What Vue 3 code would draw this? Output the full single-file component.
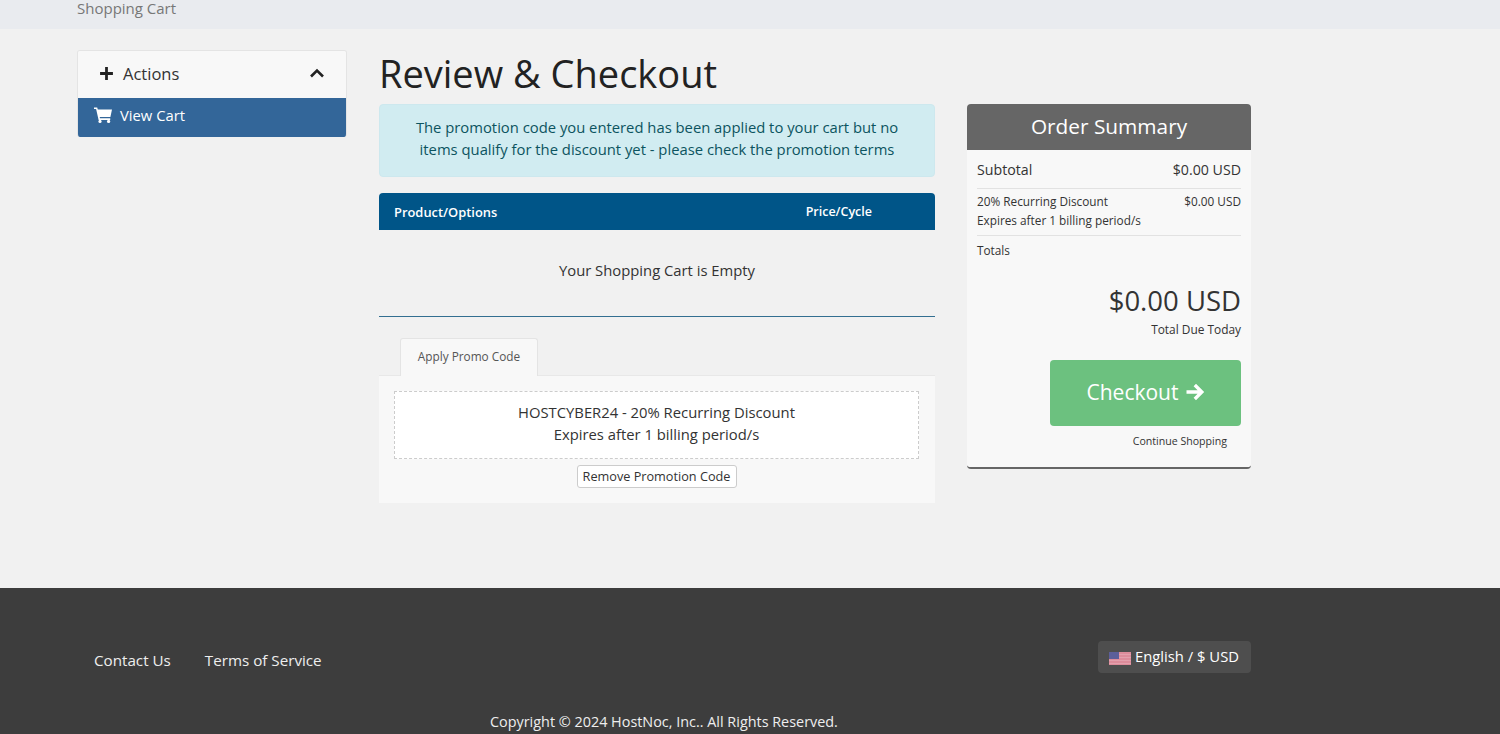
<template>
  <div class="page">
    <div class="top-bar">
      <div class="wrap">Shopping Cart</div>
    </div>

    <div class="wrap content">
      <aside class="sidebar">
        <div class="side-head">
          <span class="side-title">
            <svg class="plus" viewBox="0 0 14 14"><path d="M7 1v12M1 7h12" fill="none" stroke="#222" stroke-width="2.6" /></svg>
            Actions
          </span>
          <svg class="chevron" viewBox="0 0 16 10"><path d="M2 8.5l6-6 6 6" fill="none" stroke="#222" stroke-width="2.6" /></svg>
        </div>
        <a class="side-item">
          <svg class="cart" viewBox="0 0 18 16">
            <path d="M0 0.4h3.2l.6 2H18l-1.6 7.6H5.7l.3 1.3h10.2v1.6H4.6L2.1 2H0z" fill="#fff" />
            <circle cx="6" cy="14.4" r="1.6" fill="#fff" />
            <circle cx="14.6" cy="14.4" r="1.6" fill="#fff" />
          </svg>
          View Cart
        </a>
      </aside>

      <main class="main">
        <h1>Review &amp; Checkout</h1>
        <div class="alert">
          The promotion code you entered has been applied to your cart but no items qualify for the discount yet - please check the promotion terms
        </div>
        <div class="table-head">
          <span>Product/Options</span>
          <span class="price">Price/Cycle</span>
        </div>
        <div class="empty">Your Shopping Cart is Empty</div>

        <div class="tabs">
          <div class="tab">Apply Promo Code</div>
        </div>
        <div class="tab-body">
          <div class="promo">
            HOSTCYBER24 - 20% Recurring Discount<br />
            Expires after 1 billing period/s
          </div>
          <button class="remove">Remove Promotion Code</button>
        </div>
      </main>

      <section class="summary">
        <div class="summary-head">Order Summary</div>
        <div class="summary-body">
          <div class="row sub">
            <span>Subtotal</span>
            <span>$0.00 USD</span>
          </div>
          <div class="row discount">
            <span>20% Recurring Discount<br />Expires after 1 billing period/s</span>
            <span>$0.00 USD</span>
          </div>
          <div class="totals-label">Totals</div>
          <div class="total">$0.00 USD</div>
          <div class="due">Total Due Today</div>
          <div class="actions">
            <button class="checkout">
              Checkout
              <svg class="arrow" viewBox="0 0 20 18"><path d="M1.5 9h15M9.8 2l7 7-7 7" fill="none" stroke="#fff" stroke-width="3.4" /></svg>
            </button>
            <a class="continue">Continue Shopping</a>
          </div>
        </div>
      </section>
    </div>

    <footer class="footer">
      <div class="wrap footer-top">
        <nav class="links">
          <a>Contact Us</a>
          <a>Terms of Service</a>
        </nav>
        <button class="lang">
          <svg class="flag" viewBox="0 0 22 13">
            <rect width="22" height="13" fill="#dd8c9b" />
            <path d="M0 2.5h22M0 5.5h22M0 8.5h22M0 11.5h22" stroke="#e3a0ad" stroke-width="1" />
            <rect width="10" height="7" fill="#5c5f9a" />
          </svg>
          English / $ USD
        </button>
      </div>
      <div class="copyright">Copyright © 2024 HostNoc, Inc.. All Rights Reserved.</div>
    </footer>
  </div>
</template>

<script setup>
</script>

<style>
html, body {
  margin: 0;
  overflow: hidden;
}
</style>

<style scoped>
.page {
  height: 734px;
  overflow: hidden;
  background: #f1f1f1;
  font-family: "Open Sans", sans-serif;
  color: #333;
  display: flex;
  flex-direction: column;
}

.wrap {
  width: 1174px;
  margin-left: 77px;
}

.top-bar {
  height: 29px;
  flex: none;
  background: #e9ebef;
  color: #777;
  font-size: 15px;
  line-height: 17px;
}

.content {
  display: flex;
  align-items: flex-start;
  gap: 32px;
  padding-top: 21px;
  height: 559px;
  box-sizing: border-box;
  flex: none;
}

.sidebar {
  width: 270px;
  flex: none;
  box-sizing: border-box;
  border: 1px solid #e4e4e4;
  border-bottom: 0;
  border-radius: 3px;
  overflow: hidden;
}

.side-head {
  height: 47px;
  background: #f8f8f8;
  box-sizing: border-box;
  display: flex;
  align-items: center;
  justify-content: space-between;
  padding: 0 21px 2px 21px;
}

.side-title {
  display: flex;
  align-items: center;
  gap: 9px;
  font-size: 16.5px;
  color: #333;
}

.plus {
  width: 15px;
  height: 15px;
}

.chevron {
  width: 16px;
  height: 10px;
  margin-bottom: 2px;
}

.side-item {
  height: 39px;
  background: #336699;
  color: #fff;
  display: flex;
  align-items: center;
  gap: 8px;
  padding-left: 16px;
  padding-bottom: 5px;
  box-sizing: border-box;
  font-size: 14.8px;
  font-weight: 500;
}

.cart {
  width: 18px;
  height: 16px;
}

.main {
  width: 556px;
  flex: none;
}

h1 {
  margin: 0;
  font-size: 38px;
  font-weight: 400;
  line-height: 47px;
  color: #222;
}

.alert {
  margin-top: 7px;
  height: 73px;
  box-sizing: border-box;
  background: #d1ecf1;
  border: 1px solid #cde8ee;
  border-radius: 4px;
  color: #0c5460;
  font-size: 14.8px;
  line-height: 22px;
  text-align: center;
  padding: 11px 30px;
}

.table-head {
  margin-top: 16px;
  height: 37px;
  background: #058;
  border-radius: 4px 4px 0 0;
  color: #fff;
  font-size: 12.9px;
  font-weight: 600;
  display: flex;
  align-items: center;
  justify-content: space-between;
  padding: 0 63px 0 15px;
  box-sizing: border-box;
}

.price {
  font-size: 12.5px;
}

.empty {
  height: 87px;
  box-sizing: border-box;
  border-bottom: 1px solid #336f91;
  text-align: center;
  font-size: 14.8px;
  padding-top: 29px;
  line-height: 22px;
  color: #333;
}

.tabs {
  margin-top: 21px;
  padding-left: 21px;
  border-bottom: 1px solid #e8e8e8;
  display: flex;
  height: 37px;
}

.tab {
  width: 138px;
  height: 38px;
  box-sizing: border-box;
  background: #f8f8f8;
  border: 1px solid #e4e4e4;
  border-bottom: 0;
  border-radius: 3px 3px 0 0;
  text-align: center;
  font-size: 11.8px;
  line-height: 34px;
  color: #555;
}

.tab-body {
  background: #f8f8f8;
  height: 127px;
  box-sizing: border-box;
  padding: 15px 16px 0 15px;
  text-align: center;
}

.promo {
  height: 68px;
  box-sizing: border-box;
  background: #fff;
  border: 1px dashed #ccc;
  font-size: 14.8px;
  line-height: 22px;
  padding-top: 9px;
  color: #333;
}

.remove {
  display: block;
  margin: 6px auto 0;
  height: 23px;
  width: 160px;
  padding: 0 0 2px;
  background: #fff;
  border: 1px solid #ccc;
  border-radius: 3px;
  font-family: inherit;
  font-size: 12.7px;
  color: #333;
}

.summary {
  width: 284px;
  flex: none;
  margin-top: 54px;
  border-radius: 4px;
  overflow: hidden;
  background: #f8f8f8;
  border-bottom: 2px solid #666;
}

.summary-head {
  height: 46px;
  background: #666;
  color: #fff;
  text-align: center;
  font-size: 20.8px;
  line-height: 44px;
}

.summary-body {
  padding: 0 10px;
  height: 317px;
  box-sizing: border-box;
}

.row {
  display: flex;
  justify-content: space-between;
  border-bottom: 1px solid #e2e2e2;
}

.sub {
  height: 39px;
  box-sizing: border-box;
  font-size: 14.2px;
  line-height: 40px;
  align-items: flex-start;
}

.discount {
  height: 47px;
  box-sizing: border-box;
  font-size: 11.8px;
  line-height: 19px;
  padding-top: 3px;
}

.totals-label {
  font-size: 11.8px;
  line-height: 14px;
  margin-top: 7px;
}

.total {
  margin-top: 27px;
  text-align: right;
  font-size: 27.5px;
  line-height: 34px;
  color: #333;
}

.due {
  margin-top: 4px;
  text-align: right;
  font-size: 11.9px;
  line-height: 15px;
}

.actions {
  margin-top: 23px;
  display: flex;
  flex-direction: column;
  align-items: flex-end;
}

.checkout {
  width: 191px;
  height: 66px;
  background: #6cc17f;
  border: 0;
  border-radius: 4px;
  color: #fff;
  font-family: inherit;
  font-size: 21px;
  display: flex;
  align-items: center;
  justify-content: center;
  gap: 6px;
  padding: 0 0 2px;
}

.arrow {
  width: 20px;
  height: 18px;
}

.continue {
  margin-top: 8px;
  margin-right: 14px;
  font-size: 10.6px;
  line-height: 15px;
  color: #333;
}

.footer {
  flex: 1;
  background: #3d3d3d;
  color: #fff;
}

.footer-top {
  display: flex;
  justify-content: space-between;
  align-items: flex-start;
  padding-top: 53px;
}

.links {
  display: flex;
  gap: 34px;
  padding: 9px 0 0 17px;
  font-size: 15.2px;
  line-height: 20px;
  color: #eee;
}

.lang {
  height: 32px;
  width: 153px;
  background: #4e4e4e;
  border: 0;
  border-radius: 4px;
  color: #fff;
  font-family: inherit;
  font-size: 14.8px;
  display: flex;
  align-items: center;
  gap: 4px;
  padding: 0 0 2px 11px;
}

.flag {
  width: 22px;
  height: 13px;
  margin-top: 4px;
}

.copyright {
  margin-top: 39px;
  margin-left: 490px;
  font-size: 14.4px;
  line-height: 20px;
  color: #eee;
}
</style>
